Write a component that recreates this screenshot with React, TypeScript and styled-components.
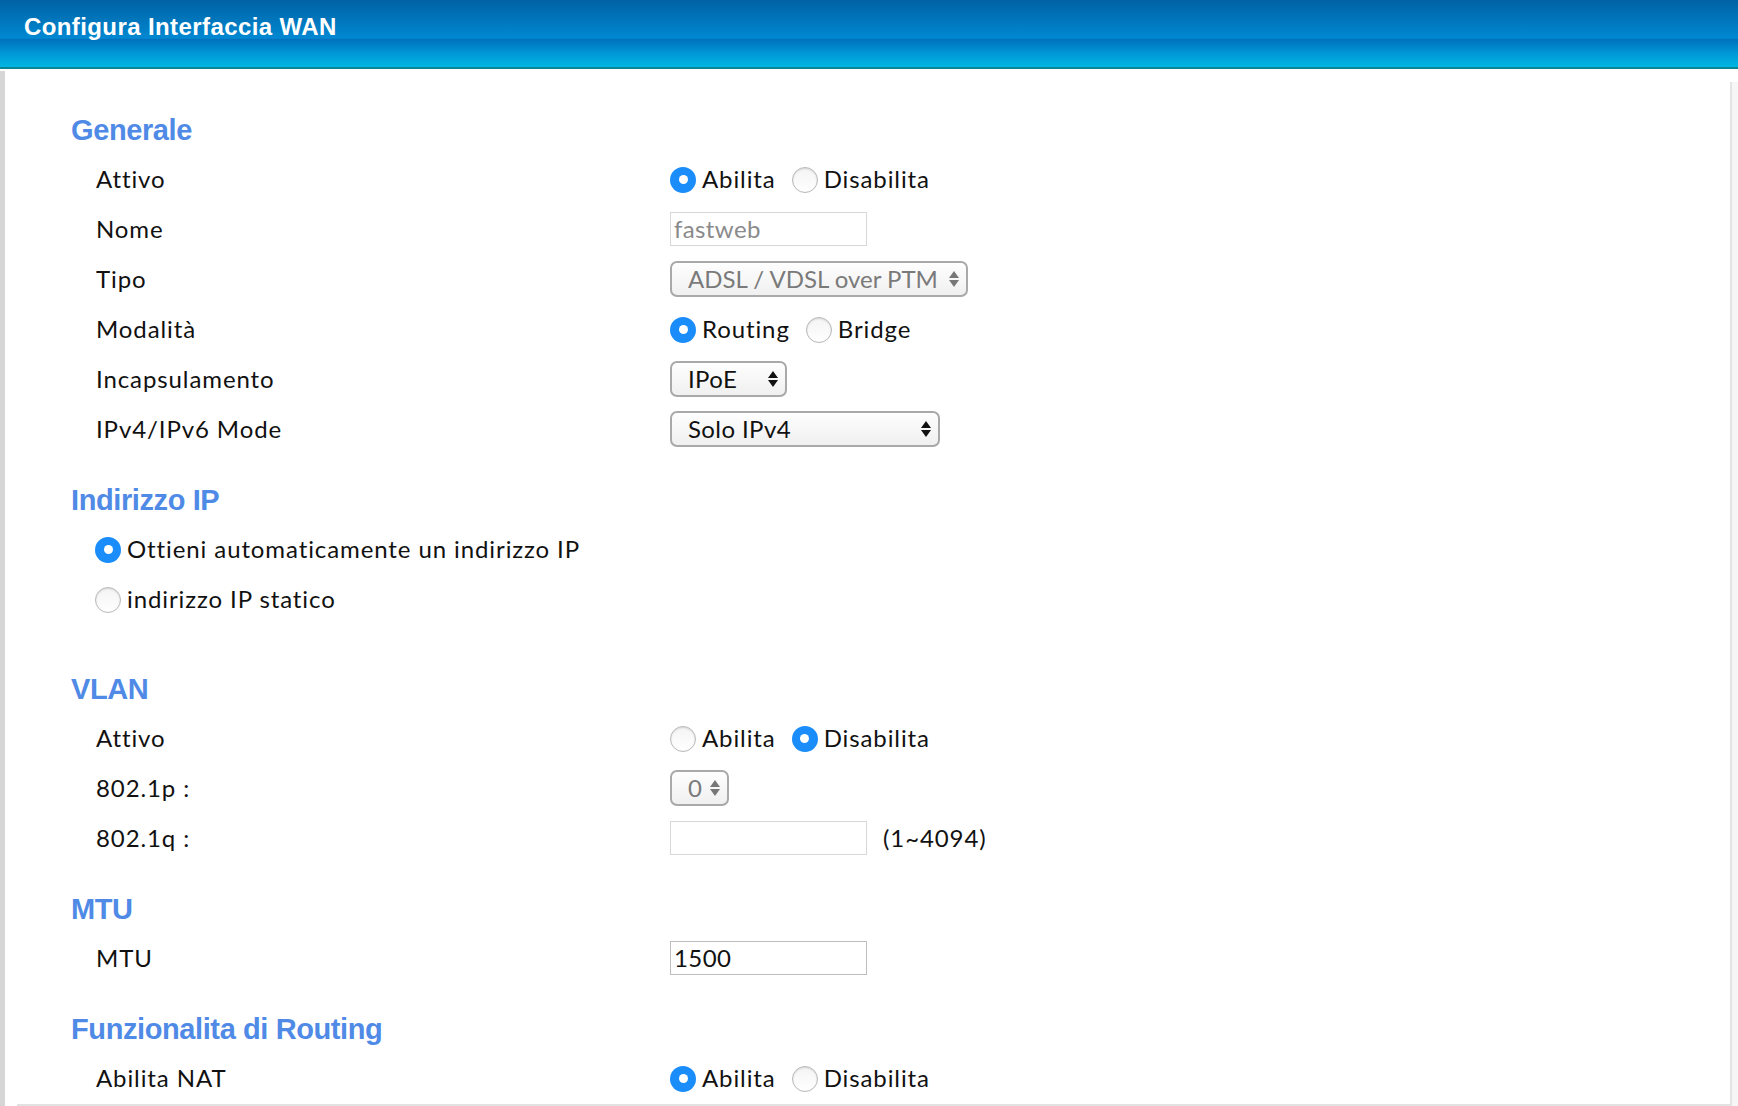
import React from 'react';
import styled, { createGlobalStyle } from 'styled-components';

const GlobalStyle = createGlobalStyle`
  html, body {
    margin: 0;
    padding: 0;
    background: #fff;
    overflow: hidden;
  }
  body {
    font-family: Lato, "Liberation Sans", sans-serif;
    color: #111;
  }
`;

const Page = styled.div`
  width: 1738px;
  height: 1106px;
  display: flex;
  flex-direction: column;
`;

const Header = styled.div`
  height: 69px;
  border-bottom: 2px solid #0a8596;
  background: linear-gradient(
    to bottom,
    #0062a4 0%,
    #0088d2 57%,
    #0072bd 59%,
    #0098d6 80%,
    #00b6e2 100%
  );
  display: flex;
  align-items: flex-start;
  padding: 13px 0 0 24px;
  box-sizing: border-box;
`;

const Title = styled.h1`
  margin: 0;
  color: #fff;
  font-family: "Liberation Sans", Arial, sans-serif;
  font-weight: 700;
  font-size: 24px;
  letter-spacing: 0.4px;
`;

const Body = styled.div`
  flex: 1;
  display: flex;
  min-height: 0;
`;

const LeftRail = styled.div`
  width: 5px;
  margin-top: 2px;
  background: #d6d6d6;
`;

const Main = styled.div`
  flex: 1;
  display: flex;
  flex-direction: column;
  overflow: hidden;
  padding: 36px 0 0 66px;
`;

const BottomLine = styled.div`
  height: 2px;
  margin: 0 0 0 12px;
  background: #e2e2e2;
`;

const Column = styled.div`
  flex: 1;
  display: flex;
  flex-direction: column;
`;

const ScrollTrack = styled.div`
  width: 6px;
  margin-top: 13px;
  border-left: 2px solid #e4e4e4;
  background: #f6f6f6;
`;

const Section = styled.section<{ $gap?: number }>`
  margin-top: ${p => p.$gap ?? 20}px;
  &:first-child {
    margin-top: 0;
  }
`;

const Heading = styled.h2`
  margin: 0;
  height: 50px;
  display: flex;
  align-items: center;
  color: #4f8ae6;
  font-family: "Liberation Sans", Arial, sans-serif;
  font-weight: 700;
  font-size: 29px;
  letter-spacing: -0.4px;
`;

const Row = styled.div`
  height: 50px;
  box-sizing: border-box;
  padding: 0 0 3px 25px;
  display: grid;
  grid-template-columns: 574px 1fr;
  align-items: center;
  font-size: 24px;
  letter-spacing: 0.9px;
  white-space: nowrap;
`;

const Label = styled.div`
  color: #111;
`;

const Control = styled.div`
  display: flex;
  align-items: center;
`;

const FullRow = styled.div`
  height: 50px;
  box-sizing: border-box;
  padding: 0 0 3px 24px;
  display: flex;
  align-items: center;
  font-size: 24px;
  letter-spacing: 0.9px;
  white-space: nowrap;
`;

const RadioItem = styled.label`
  display: inline-flex;
  align-items: center;
  gap: 6px;
  margin-right: 16px;
  color: #111;
  &:last-child {
    margin-right: 0;
  }
`;

const RadioDot = styled.span<{ $on?: boolean }>`
  width: 26px;
  height: 26px;
  border-radius: 50%;
  box-sizing: border-box;
  display: inline-flex;
  align-items: center;
  justify-content: center;
  flex-shrink: 0;
  margin-top: 2px;
  background: ${p => (p.$on ? '#1a8dfb' : 'linear-gradient(#f4f4f4, #ffffff)')};
  border: ${p => (p.$on ? 'none' : '1px solid #b8b8b8')};
  box-shadow: ${p => (p.$on ? 'none' : 'inset 0 1px 2px rgba(0,0,0,0.12)')};
  &::after {
    content: '';
    display: ${p => (p.$on ? 'block' : 'none')};
    width: 9px;
    height: 9px;
    border-radius: 50%;
    background: #fff;
  }
`;

const TextBox = styled.div<{ $muted?: boolean; $dark?: boolean }>`
  width: 197px;
  height: 34px;
  box-sizing: border-box;
  border: 1px solid ${p => (p.$dark ? '#bdbdbd' : '#d8d8d8')};
  display: flex;
  align-items: center;
  padding-left: 3px;
  letter-spacing: 0.4px;
  color: ${p => (p.$muted ? '#8a8a8a' : '#111')};
  background: #fff;
`;

const Select = styled.div<{ $w: number; $muted?: boolean }>`
  width: ${p => p.$w}px;
  height: 36px;
  box-sizing: border-box;
  border: 2px solid #a9a9a9;
  border-radius: 7px;
  background: linear-gradient(#fefefe, #f0f0f0);
  display: flex;
  align-items: center;
  justify-content: space-between;
  padding: 0 6px 0 16px;
  letter-spacing: ${p => (p.$muted ? '0' : '0.4px')};
  white-space: nowrap;
  overflow: hidden;
  color: ${p => (p.$muted ? '#7a7a7a' : '#111')};
  svg {
    flex-shrink: 0;
  }
`;

const Hint = styled.span`
  margin-left: 16px;
  color: #111;
`;

const Arrows = ({ muted }: { muted?: boolean }) => (
  <svg width="12" height="20" viewBox="0 0 12 20">
    <path d="M6 2 L11 9 L1 9 Z" fill={muted ? '#777' : '#111'} />
    <path d="M6 18 L11 11 L1 11 Z" fill={muted ? '#777' : '#111'} />
  </svg>
);

const Radio = ({ on, children }: { on?: boolean; children: React.ReactNode }) => (
  <RadioItem>
    <RadioDot $on={on} />
    {children}
  </RadioItem>
);

export default function App() {
  return (
    <>
      <GlobalStyle />
      <Page>
        <Header>
          <Title>Configura Interfaccia WAN</Title>
        </Header>
        <Body>
          <LeftRail />
          <Column>
            <Main>
              <Section>
                <Heading>Generale</Heading>
                <Row>
                  <Label>Attivo</Label>
                  <Control>
                    <Radio on>Abilita</Radio>
                    <Radio>Disabilita</Radio>
                  </Control>
                </Row>
                <Row>
                  <Label>Nome</Label>
                  <Control>
                    <TextBox $muted>fastweb</TextBox>
                  </Control>
                </Row>
                <Row>
                  <Label>Tipo</Label>
                  <Control>
                    <Select $w={298} $muted>
                      ADSL / VDSL over PTM
                      <Arrows muted />
                    </Select>
                  </Control>
                </Row>
                <Row>
                  <Label>Modalità</Label>
                  <Control>
                    <Radio on>Routing</Radio>
                    <Radio>Bridge</Radio>
                  </Control>
                </Row>
                <Row>
                  <Label>Incapsulamento</Label>
                  <Control>
                    <Select $w={117}>
                      IPoE
                      <Arrows />
                    </Select>
                  </Control>
                </Row>
                <Row>
                  <Label>IPv4/IPv6 Mode</Label>
                  <Control>
                    <Select $w={270}>
                      Solo IPv4
                      <Arrows />
                    </Select>
                  </Control>
                </Row>
              </Section>

              <Section>
                <Heading>Indirizzo IP</Heading>
                <FullRow>
                  <Radio on>Ottieni automaticamente un indirizzo IP</Radio>
                </FullRow>
                <FullRow>
                  <Radio>indirizzo IP statico</Radio>
                </FullRow>
              </Section>

              <Section $gap={39}>
                <Heading>VLAN</Heading>
                <Row>
                  <Label>Attivo</Label>
                  <Control>
                    <Radio>Abilita</Radio>
                    <Radio on>Disabilita</Radio>
                  </Control>
                </Row>
                <Row>
                  <Label>802.1p :</Label>
                  <Control>
                    <Select $w={59} $muted>
                      0
                      <Arrows muted />
                    </Select>
                  </Control>
                </Row>
                <Row>
                  <Label>802.1q :</Label>
                  <Control>
                    <TextBox />
                    <Hint>(1~4094)</Hint>
                  </Control>
                </Row>
              </Section>

              <Section>
                <Heading>MTU</Heading>
                <Row>
                  <Label>MTU</Label>
                  <Control>
                    <TextBox $dark>1500</TextBox>
                  </Control>
                </Row>
              </Section>

              <Section>
                <Heading>Funzionalita di Routing</Heading>
                <Row>
                  <Label>Abilita NAT</Label>
                  <Control>
                    <Radio on>Abilita</Radio>
                    <Radio>Disabilita</Radio>
                  </Control>
                </Row>
              </Section>
            </Main>
            <BottomLine />
          </Column>
          <ScrollTrack />
        </Body>
      </Page>
    </>
  );
}
